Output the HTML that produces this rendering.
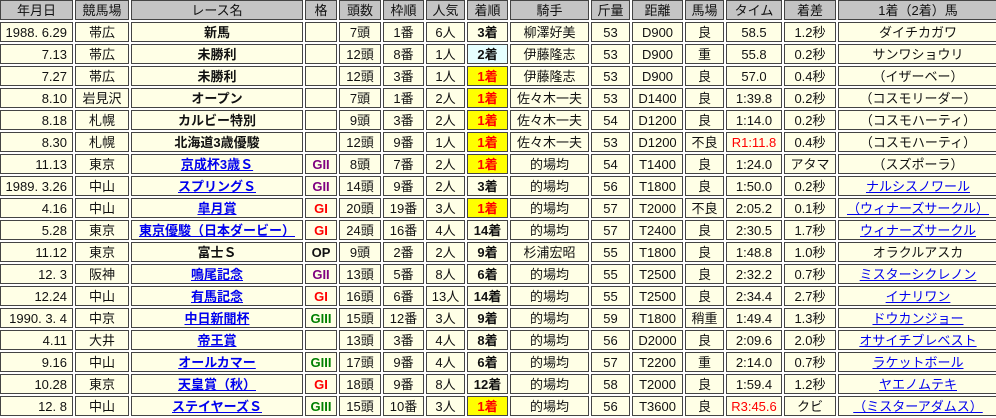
<!DOCTYPE html>
<html><head><meta charset="utf-8"><style>
body{margin:0;background:#fff;width:996px;height:415px;overflow:hidden;}
table{border-collapse:separate;border-spacing:2px;table-layout:fixed;margin:-2px 0 0 -2px;font-family:"Liberation Sans","Noto Sans CJK JP",sans-serif;font-size:13px;width:1002px;}
td,th{border:1px solid #444;background:#ffffe6;padding:0 2px;height:20px;box-sizing:border-box;line-height:17px;text-align:center;white-space:nowrap;overflow:hidden;color:#111;font-weight:normal}
th{background:#c4c4c4;height:20px}
td.r{text-align:right;padding-right:5px}
b{font-weight:bold}
a{color:#0000ee;font-weight:bold;text-decoration:underline}
.g1{color:#f00;font-weight:bold}.g2{color:#800080;font-weight:bold}.g3{color:#008000;font-weight:bold}.op{font-weight:bold}
.w{background:#ffff00;color:#f00;font-weight:bold}.s{background:#e6ffff;font-weight:bold}.k{font-weight:bold}
.red{color:#f00}
</style></head><body>
<table>
<colgroup><col style="width:73px"><col style="width:54px"><col style="width:172px"><col style="width:32px"><col style="width:42px"><col style="width:41px"><col style="width:39px"><col style="width:41px"><col style="width:79px"><col style="width:39px"><col style="width:51px"><col style="width:39px"><col style="width:56px"><col style="width:52px"><col style="width:160px"></colgroup>
<tr><th>年月日</th><th>競馬場</th><th>レース名</th><th>格</th><th>頭数</th><th>枠順</th><th>人気</th><th>着順</th><th>騎手</th><th>斤量</th><th>距離</th><th>馬場</th><th>タイム</th><th>着差</th><th>1着（2着）馬</th></tr>
<tr><td class="r">1988. 6.29</td><td>帯広</td><td class="k">新馬</td><td></td><td>7頭</td><td>1番</td><td>6人</td><td class="k">3着</td><td>柳澤好美</td><td>53</td><td>D900</td><td>良</td><td>58.5</td><td>1.2秒</td><td>ダイチカガワ</td></tr>
<tr><td class="r">7.13</td><td>帯広</td><td class="k">未勝利</td><td></td><td>12頭</td><td>8番</td><td>1人</td><td class="s">2着</td><td>伊藤隆志</td><td>53</td><td>D900</td><td>重</td><td>55.8</td><td>0.2秒</td><td>サンワショウリ</td></tr>
<tr><td class="r">7.27</td><td>帯広</td><td class="k">未勝利</td><td></td><td>12頭</td><td>3番</td><td>1人</td><td class="w">1着</td><td>伊藤隆志</td><td>53</td><td>D900</td><td>良</td><td>57.0</td><td>0.4秒</td><td>（イザーベー）</td></tr>
<tr><td class="r">8.10</td><td>岩見沢</td><td class="k">オープン</td><td></td><td>7頭</td><td>1番</td><td>2人</td><td class="w">1着</td><td>佐々木一夫</td><td>53</td><td>D1400</td><td>良</td><td>1:39.8</td><td>0.2秒</td><td>（コスモリーダー）</td></tr>
<tr><td class="r">8.18</td><td>札幌</td><td class="k">カルビー特別</td><td></td><td>9頭</td><td>3番</td><td>2人</td><td class="w">1着</td><td>佐々木一夫</td><td>54</td><td>D1200</td><td>良</td><td>1:14.0</td><td>0.2秒</td><td>（コスモハーティ）</td></tr>
<tr><td class="r">8.30</td><td>札幌</td><td class="k">北海道3歳優駿</td><td></td><td>12頭</td><td>9番</td><td>1人</td><td class="w">1着</td><td>佐々木一夫</td><td>53</td><td>D1200</td><td>不良</td><td class="red">R1:11.8</td><td>0.4秒</td><td>（コスモハーティ）</td></tr>
<tr><td class="r">11.13</td><td>東京</td><td><a>京成杯3歳Ｓ</a></td><td class="g2">GII</td><td>8頭</td><td>7番</td><td>2人</td><td class="w">1着</td><td>的場均</td><td>54</td><td>T1400</td><td>良</td><td>1:24.0</td><td>アタマ</td><td>（スズポーラ）</td></tr>
<tr><td class="r">1989. 3.26</td><td>中山</td><td><a>スプリングＳ</a></td><td class="g2">GII</td><td>14頭</td><td>9番</td><td>2人</td><td class="k">3着</td><td>的場均</td><td>56</td><td>T1800</td><td>良</td><td>1:50.0</td><td>0.2秒</td><td><a style="font-weight:normal">ナルシスノワール</a></td></tr>
<tr><td class="r">4.16</td><td>中山</td><td><a>皐月賞</a></td><td class="g1">GI</td><td>20頭</td><td>19番</td><td>3人</td><td class="w">1着</td><td>的場均</td><td>57</td><td>T2000</td><td>不良</td><td>2:05.2</td><td>0.1秒</td><td><a style="font-weight:normal">（ウィナーズサークル）</a></td></tr>
<tr><td class="r">5.28</td><td>東京</td><td><a>東京優駿（日本ダービー）</a></td><td class="g1">GI</td><td>24頭</td><td>16番</td><td>4人</td><td class="k">14着</td><td>的場均</td><td>57</td><td>T2400</td><td>良</td><td>2:30.5</td><td>1.7秒</td><td><a style="font-weight:normal">ウィナーズサークル</a></td></tr>
<tr><td class="r">11.12</td><td>東京</td><td class="k">富士Ｓ</td><td class="op">OP</td><td>9頭</td><td>2番</td><td>2人</td><td class="k">9着</td><td>杉浦宏昭</td><td>55</td><td>T1800</td><td>良</td><td>1:48.8</td><td>1.0秒</td><td>オラクルアスカ</td></tr>
<tr><td class="r">12. 3</td><td>阪神</td><td><a>鳴尾記念</a></td><td class="g2">GII</td><td>13頭</td><td>5番</td><td>8人</td><td class="k">6着</td><td>的場均</td><td>55</td><td>T2500</td><td>良</td><td>2:32.2</td><td>0.7秒</td><td><a style="font-weight:normal">ミスターシクレノン</a></td></tr>
<tr><td class="r">12.24</td><td>中山</td><td><a>有馬記念</a></td><td class="g1">GI</td><td>16頭</td><td>6番</td><td>13人</td><td class="k">14着</td><td>的場均</td><td>55</td><td>T2500</td><td>良</td><td>2:34.4</td><td>2.7秒</td><td><a style="font-weight:normal">イナリワン</a></td></tr>
<tr><td class="r">1990. 3. 4</td><td>中京</td><td><a>中日新聞杯</a></td><td class="g3">GIII</td><td>15頭</td><td>12番</td><td>3人</td><td class="k">9着</td><td>的場均</td><td>59</td><td>T1800</td><td>稍重</td><td>1:49.4</td><td>1.3秒</td><td><a style="font-weight:normal">ドウカンジョー</a></td></tr>
<tr><td class="r">4.11</td><td>大井</td><td><a>帝王賞</a></td><td></td><td>13頭</td><td>3番</td><td>4人</td><td class="k">8着</td><td>的場均</td><td>56</td><td>D2000</td><td>良</td><td>2:09.6</td><td>2.0秒</td><td><a style="font-weight:normal">オサイチブレベスト</a></td></tr>
<tr><td class="r">9.16</td><td>中山</td><td><a>オールカマー</a></td><td class="g3">GIII</td><td>17頭</td><td>9番</td><td>4人</td><td class="k">6着</td><td>的場均</td><td>57</td><td>T2200</td><td>重</td><td>2:14.0</td><td>0.7秒</td><td><a style="font-weight:normal">ラケットボール</a></td></tr>
<tr><td class="r">10.28</td><td>東京</td><td><a>天皇賞（秋）</a></td><td class="g1">GI</td><td>18頭</td><td>9番</td><td>8人</td><td class="k">12着</td><td>的場均</td><td>58</td><td>T2000</td><td>良</td><td>1:59.4</td><td>1.2秒</td><td><a style="font-weight:normal">ヤエノムテキ</a></td></tr>
<tr><td class="r">12. 8</td><td>中山</td><td><a>ステイヤーズＳ</a></td><td class="g3">GIII</td><td>15頭</td><td>10番</td><td>3人</td><td class="w">1着</td><td>的場均</td><td>56</td><td>T3600</td><td>良</td><td class="red">R3:45.6</td><td>クビ</td><td><a style="font-weight:normal">（ミスターアダムス）</a></td></tr>
</table>
</body></html>
